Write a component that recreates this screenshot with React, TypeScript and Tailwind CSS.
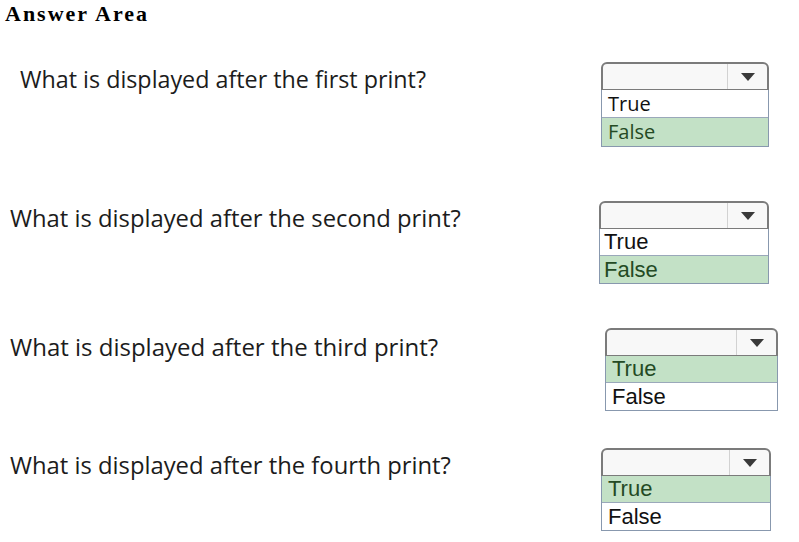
const rows = [
  {
    q: 'What is displayed after the first print?',
    wrap: 'mt-[37px] h-[139px]',
    text: 'ml-[20px] mt-[2px] w-[581px] text-[23.3px]',
    box: 'w-[168px]',
    opt: 'font-["Open_Sans"] text-[20px] h-[28px] pl-[6px]',
    pick: 'False',
  },
  {
    q: 'What is displayed after the second print?',
    wrap: 'h-[127px]',
    text: 'ml-[10px] mt-[2px] w-[589px] text-[23.8px]',
    box: 'w-[170px]',
    opt: 'font-["Liberation_Sans"] text-[22px] h-[27px] pl-[4px]',
    pick: 'False',
  },
  {
    q: 'What is displayed after the third print?',
    wrap: 'h-[120px]',
    text: 'ml-[10px] mt-[4px] w-[595px] text-[24px]',
    box: 'w-[173px]',
    opt: 'font-["Liberation_Sans"] text-[22px] h-[27px] pl-[6px]',
    pick: 'True',
  },
  {
    q: 'What is displayed after the fourth print?',
    wrap: 'h-[94px]',
    text: 'ml-[10px] mt-[2px] w-[591px] text-[23.8px]',
    box: 'w-[170px]',
    opt: 'font-["Liberation_Sans"] text-[22px] h-[27px] pl-[6px]',
    pick: 'True',
  },
]

function Dropdown({ box, opt, pick }: { box: string; opt: string; pick: string }) {
  return (
    <div className={box}>
      <div className="flex h-[28px] rounded-t-[6px] border-2 border-b border-[#7b7b7b] bg-[#f8f8f8]">
        <div className="flex-1" />
        <div className="flex w-[40px] items-center justify-center border-l border-[#d2d2d2]">
          <svg viewBox="0 0 16 10" className="h-[10px] w-[16px]">
            <path d="M1 1h14L8 9z" fill="#3a3a3a" />
          </svg>
        </div>
      </div>
      <div className="border border-t-0 border-[#8898ae]">
        {['True', 'False'].map((o) => (
          <div
            key={o}
            className={`flex items-center leading-none ${opt} ${
              o === pick ? 'bg-[#c3e1c6] text-[#244a24]' : 'bg-white text-[#111]'
            } ${o === 'True' ? 'border-b border-[#9aa8ba]' : ''}`}
          >
            {o}
          </div>
        ))}
      </div>
    </div>
  )
}

export default function App() {
  return (
    <div className="h-[542px] w-[799px] overflow-hidden bg-white">
      <div className="pl-[5px] pt-[3px] font-['Liberation_Serif'] text-[22px] font-bold leading-[22px] tracking-[2px] text-black">
        Answer Area
      </div>
      {rows.map((r) => (
        <div key={r.q} className={`flex items-start ${r.wrap}`}>
          <div className={`font-["Open_Sans"] leading-[30px] text-[#1c1c1c] ${r.text}`}>{r.q}</div>
          <Dropdown box={r.box} opt={r.opt} pick={r.pick} />
        </div>
      ))}
    </div>
  )
}
